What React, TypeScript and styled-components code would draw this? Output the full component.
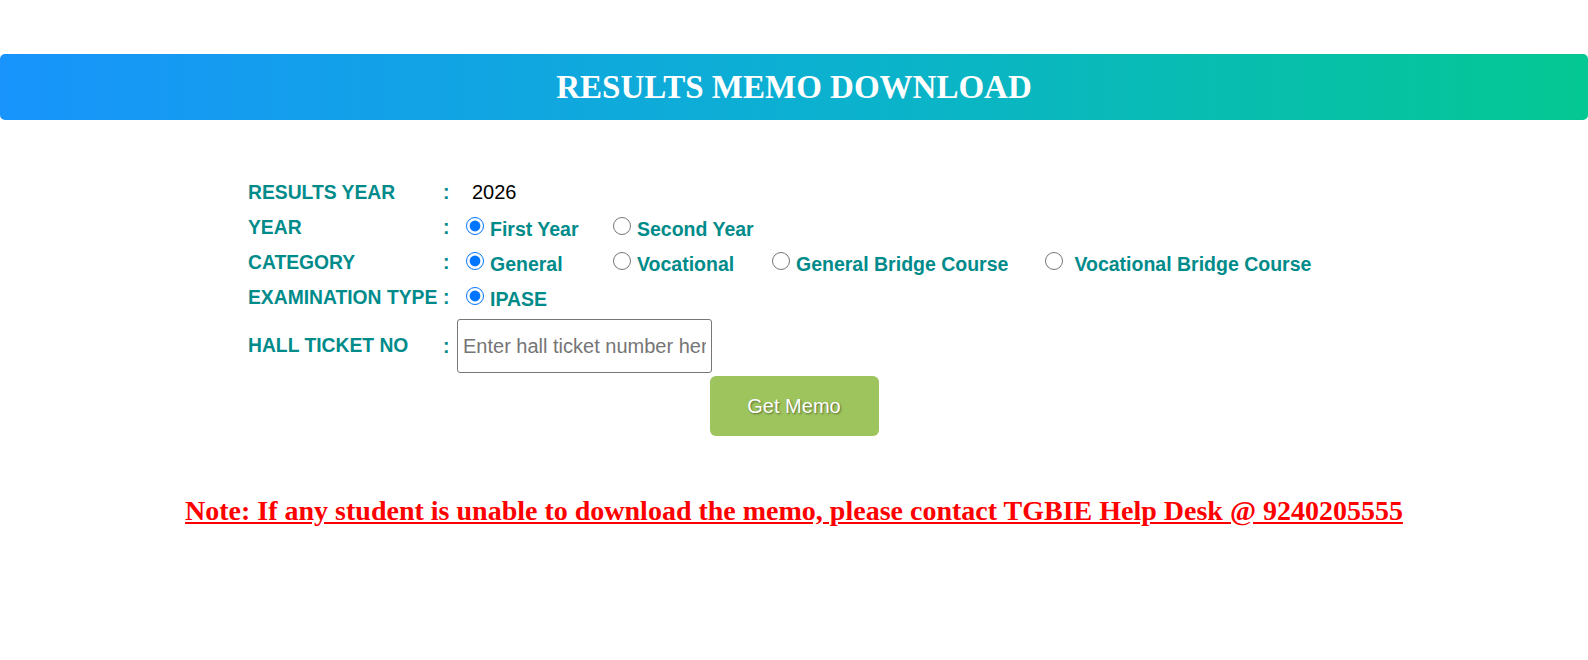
import { useState } from "react";
import styled, { createGlobalStyle } from "styled-components";

const GlobalStyle = createGlobalStyle`
  body {
    margin: 0;
    background: #fff;
    font-family: "Liberation Sans", Arial, sans-serif;
  }
`;

const Page = styled.div`
  width: 1588px;
  padding-top: 54px;
`;

const Banner = styled.div`
  height: 66px;
  border-radius: 5px;
  background: linear-gradient(90deg, #1894fc 0%, #0cb0d2 50%, #04c893 100%);
  display: flex;
  align-items: center;
  justify-content: center;

  h1 {
    margin: 0;
    color: #fff;
    font-family: "Liberation Serif", "Times New Roman", serif;
    font-size: 33px;
    font-weight: bold;
  }
`;

const Form = styled.div`
  margin: 55px 0 0 248px;
  display: flex;
  flex-direction: column;
`;

const Row = styled.div<{ $tall?: boolean }>`
  display: grid;
  grid-template-columns: 190px 19px 1fr;
  align-items: center;
  height: ${(p) => (p.$tall ? "54px" : "35px")};
  margin-top: ${(p) => (p.$tall ? "4px" : "0")};
`;

const Label = styled.span`
  color: #008b8b;
  font-weight: bold;
  font-size: 19.3px;
  white-space: nowrap;
`;

const Colon = styled.span`
  color: #008b8b;
  font-weight: bold;
  font-size: 19.5px;
  padding-left: 5px;
`;

const Value = styled.span`
  font-size: 20px;
  color: #000;
  padding-left: 15px;
`;

const Options = styled.div`
  display: flex;
  align-items: center;
  padding-left: 9px;
`;

const Option = styled.label<{ $width?: number }>`
  display: flex;
  align-items: center;
  gap: 6px;
  width: ${(p) => (p.$width ? `${p.$width}px` : "auto")};
  color: #008b8b;
  font-weight: bold;
  font-size: 19.5px;
  white-space: nowrap;
  cursor: pointer;

  input {
    margin: 0;
    width: 18px;
    height: 18px;
    flex-shrink: 0;
    position: relative;
    top: -2px;
  }

  span {
    position: relative;
    top: 2px;
  }
`;

const TicketInput = styled.input`
  box-sizing: border-box;
  width: 255px;
  height: 54px;
  border: 1px solid #767676;
  border-radius: 3px;
  padding: 0 5px;
  font-family: "Liberation Sans", Arial, sans-serif;
  font-size: 20px;
  color: #000;

  &::placeholder {
    color: #757575;
  }
`;

const ButtonRow = styled.div`
  display: flex;
  justify-content: center;
  margin-top: 3px;
`;

const MemoButton = styled.button`
  width: 169px;
  height: 60px;
  border: none;
  border-radius: 6px;
  background: #9dc45d;
  color: #fff;
  font-family: "Liberation Sans", Arial, sans-serif;
  font-size: 20px;
  text-shadow: 1px 1px 2px rgba(0, 0, 0, 0.45);
  cursor: pointer;
`;

const Note = styled.p`
  margin: 59px 0 0;
  text-align: center;
  color: #f00;
  font-family: "Liberation Serif", "Times New Roman", serif;
  font-weight: bold;
  font-size: 28px;
  text-decoration: underline;
`;

export default function App() {
  const [year, setYear] = useState("first");
  const [category, setCategory] = useState("general");
  const [ticket, setTicket] = useState("");

  const categories = [
    { id: "general", text: "General", width: 147 },
    { id: "vocational", text: "Vocational", width: 159 },
    { id: "gbc", text: "General Bridge Course", width: 273 },
    { id: "vbc", text: "\u00a0Vocational Bridge Course" },
  ];

  return (
    <>
      <GlobalStyle />
      <Page>
        <Banner>
          <h1>RESULTS MEMO DOWNLOAD</h1>
        </Banner>

        <Form>
          <Row>
            <Label>RESULTS YEAR</Label>
            <Colon>:</Colon>
            <Value>2026</Value>
          </Row>
          <Row>
            <Label>YEAR</Label>
            <Colon>:</Colon>
            <Options>
              <Option $width={147}>
                <input type="radio" name="year" checked={year === "first"} onChange={() => setYear("first")} />
                <span>First Year</span>
              </Option>
              <Option>
                <input type="radio" name="year" checked={year === "second"} onChange={() => setYear("second")} />
                <span>Second Year</span>
              </Option>
            </Options>
          </Row>
          <Row>
            <Label>CATEGORY</Label>
            <Colon>:</Colon>
            <Options>
              {categories.map((c) => (
                <Option key={c.id} $width={c.width}>
                  <input
                    type="radio"
                    name="category"
                    checked={category === c.id}
                    onChange={() => setCategory(c.id)}
                  />
                  <span>{c.text}</span>
                </Option>
              ))}
            </Options>
          </Row>
          <Row>
            <Label>EXAMINATION TYPE</Label>
            <Colon>:</Colon>
            <Options>
              <Option>
                <input type="radio" name="exam" defaultChecked />
                <span>IPASE</span>
              </Option>
            </Options>
          </Row>
          <Row $tall>
            <Label>HALL TICKET NO</Label>
            <Colon>:</Colon>
            <TicketInput
              type="text"
              placeholder="Enter hall ticket number here"
              value={ticket}
              onChange={(e) => setTicket(e.target.value)}
            />
          </Row>
        </Form>

        <ButtonRow>
          <MemoButton>Get Memo</MemoButton>
        </ButtonRow>

        <Note>Note: If any student is unable to download the memo, please contact TGBIE Help Desk @ 9240205555</Note>
      </Page>
    </>
  );
}
